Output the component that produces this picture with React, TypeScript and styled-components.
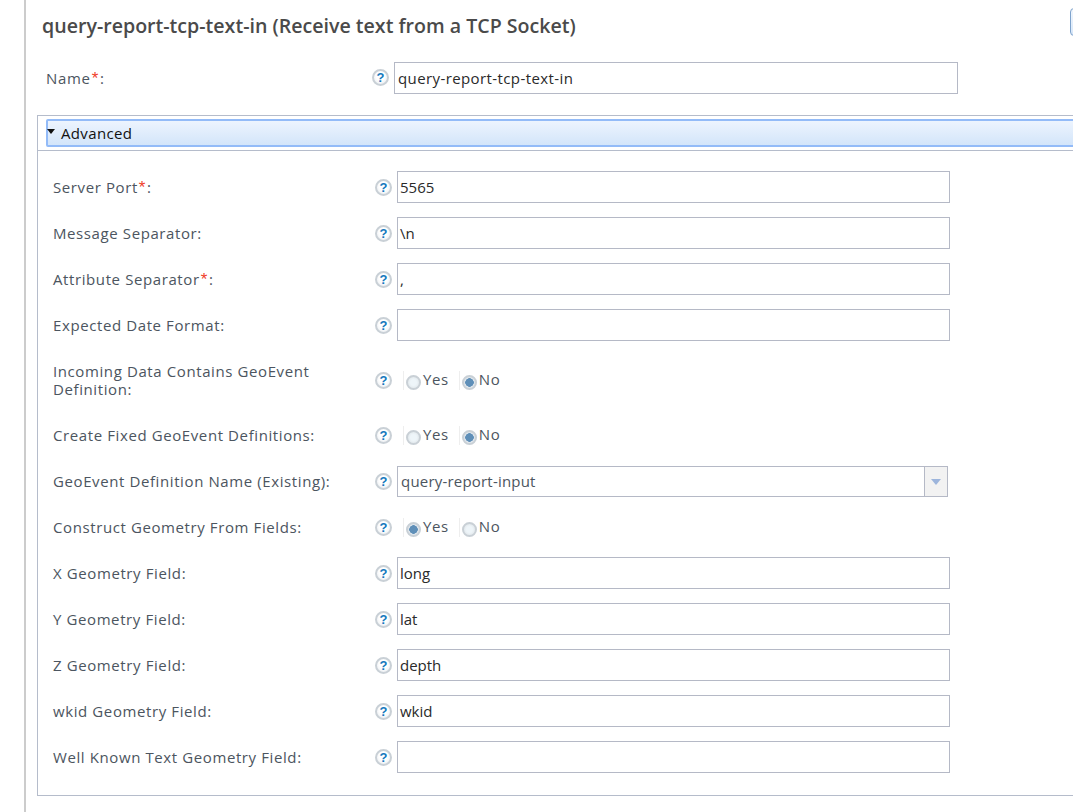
import React from "react";
import styled, { createGlobalStyle } from "styled-components";

const GlobalStyle = createGlobalStyle`
  html, body {
    margin: 0;
    padding: 0;
    height: 100%;
    overflow: hidden;
    background: #fff;
  }
  body {
    font-family: "Open Sans", "DejaVu Sans", sans-serif;
  }
`;

type Field =
  | { kind: "text"; label: string; value?: string; required?: boolean }
  | { kind: "radio"; label: string; selected: "Yes" | "No"; tall?: boolean }
  | { kind: "select"; label: string; value: string };

const fields: Field[] = [
  { kind: "text", label: "Server Port", value: "5565", required: true },
  { kind: "text", label: "Message Separator", value: "\\n" },
  { kind: "text", label: "Attribute Separator", value: ",", required: true },
  { kind: "text", label: "Expected Date Format" },
  { kind: "radio", label: "Incoming Data Contains GeoEvent Definition", selected: "No", tall: true },
  { kind: "radio", label: "Create Fixed GeoEvent Definitions", selected: "No" },
  { kind: "select", label: "GeoEvent Definition Name (Existing)", value: "query-report-input" },
  { kind: "radio", label: "Construct Geometry From Fields", selected: "Yes" },
  { kind: "text", label: "X Geometry Field", value: "long" },
  { kind: "text", label: "Y Geometry Field", value: "lat" },
  { kind: "text", label: "Z Geometry Field", value: "depth" },
  { kind: "text", label: "wkid Geometry Field", value: "wkid" },
  { kind: "text", label: "Well Known Text Geometry Field" },
];

const App = () => {
  return (
    <>
      <GlobalStyle />
      <Page>
        <TitleRow>
          <Title>query-report-tcp-text-in (Receive text from a TCP Socket)</Title>
          <CornerButton />
        </TitleRow>
        <NameRow>
          <NameLabel>
            Name<Star>*</Star>:
          </NameLabel>
          <Help>?</Help>
          <NameInput>query-report-tcp-text-in</NameInput>
        </NameRow>
        <Panel>
          <PanelHeader>
            <HeaderBar>
              <Caret />
              Advanced
            </HeaderBar>
          </PanelHeader>
          <PanelBody>
            {fields.map((field) => (
              <Row key={field.label} $tall={field.kind === "radio" && field.tall}>
                <RowLabel>
                  {field.label}
                  {field.kind === "text" && field.required && <Star>*</Star>}:
                </RowLabel>
                <RowHelp>?</RowHelp>
                {field.kind === "text" && <TextBox>{field.value}</TextBox>}
                {field.kind === "select" && (
                  <SelectBox>
                    <SelectValue>{field.value}</SelectValue>
                    <SelectArrow>
                      <ArrowTip />
                    </SelectArrow>
                  </SelectBox>
                )}
                {field.kind === "radio" && (
                  <RadioGroup>
                    <RadioOption>
                      <Radio $checked={field.selected === "Yes"} />
                      <RadioText>Yes</RadioText>
                    </RadioOption>
                    <RadioOption>
                      <Radio $checked={field.selected === "No"} />
                      <RadioText>No</RadioText>
                    </RadioOption>
                  </RadioGroup>
                )}
              </Row>
            ))}
          </PanelBody>
        </Panel>
      </Page>
    </>
  );
};

export default App;

const Page = styled.div`
  box-sizing: border-box;
  width: 1200px;
  height: 812px;
  margin-left: 24px;
  padding-left: 11px;
  border-left: 2px solid #cccccc;
`;

const TitleRow = styled.div`
  display: flex;
  align-items: center;
  justify-content: space-between;
  height: 43px;
  padding: 8px 0 0 5px;
  box-sizing: border-box;
`;

const Title = styled.h1`
  margin: 0;
  font-size: 19.6px;
  font-weight: 600;
  color: #4a4a4a;
  white-space: nowrap;
`;

const CornerButton = styled.div`
  align-self: flex-start;
  width: 40px;
  height: 28px;
  margin-right: 114px;
  box-sizing: border-box;
  border: 1px solid #7fa3cc;
  border-radius: 4px;
  background: linear-gradient(#f2f7fd, #d6e6f8);
`;

const NameRow = styled.div`
  display: flex;
  align-items: center;
  height: 32px;
  margin-top: 19px;
  padding-left: 9px;
`;

const Star = styled.span`
  margin: 0 1px;
  font-family: "Liberation Sans", sans-serif;
  font-size: 17px;
  line-height: 14px;
  color: #f0402a;
`;

const NameLabel = styled.label`
  width: 326px;
  font-size: 15px;
  letter-spacing: 0.7px;
  color: #4c5560;
`;

const Help = styled.span`
  flex: none;
  display: flex;
  align-items: center;
  justify-content: center;
  box-sizing: border-box;
  width: 17px;
  height: 17px;
  margin-top: -1px;
  border: 2px solid #c9d0d6;
  border-radius: 50%;
  background: radial-gradient(circle at 50% 40%, #ffffff 40%, #e4e9ed 100%);
  color: #1478bd;
  font-family: "Liberation Sans", sans-serif;
  font-size: 13px;
  font-weight: 700;
  line-height: 1;
`;

const RowHelp = styled(Help)`
  margin-top: 0;
`;

const NameInput = styled.div`
  box-sizing: border-box;
  width: 564px;
  height: 32px;
  margin-left: 5px;
  padding-left: 3px;
  border: 1px solid #b5b9c6;
  font-size: 15px;
  letter-spacing: 0.4px;
  line-height: 30px;
  color: #2a2a2a;
`;

const Panel = styled.section`
  width: 1160px;
  margin-top: 21px;
  border: 1px solid #b5bccb;
  box-sizing: border-box;
`;

const PanelHeader = styled.div`
  padding: 3px 0 3px 8px;
  border-bottom: 1px solid #b5bccb;
  background: #fff;
`;

const HeaderBar = styled.div`
  display: flex;
  align-items: center;
  box-sizing: border-box;
  height: 28px;
  border: 2px solid #93bbf8;
  border-radius: 2px;
  background: linear-gradient(#edf4fe, #d3e5fa);
  font-size: 15px;
  letter-spacing: 0.35px;
  color: #111;
`;

const Caret = styled.span`
  width: 0;
  height: 0;
  margin: 0 6px 3px -1px;
  border-left: 4px solid transparent;
  border-right: 4px solid transparent;
  border-top: 5px solid #111;
`;

const PanelBody = styled.div`
  display: flex;
  flex-direction: column;
  gap: 14px;
  padding: 20px 0 22px 15px;
`;

const Row = styled.div<{ $tall?: boolean }>`
  display: flex;
  align-items: center;
  height: ${({ $tall }) => ($tall ? "50px" : "32px")};
`;

const RowLabel = styled.label`
  width: 322px;
  padding-right: 10px;
  box-sizing: border-box;
  font-size: 15px;
  letter-spacing: 0.6px;
  line-height: 18px;
  color: #4c5560;
`;

const TextBox = styled.div`
  box-sizing: border-box;
  width: 553px;
  height: 32px;
  margin-left: 5px;
  padding-left: 2px;
  border: 1px solid #b5b9c6;
  font-size: 15px;
  line-height: 30px;
  color: #2a2a2a;
`;

const SelectBox = styled.div`
  display: flex;
  box-sizing: border-box;
  width: 551px;
  height: 31px;
  margin: 1px 0 0 5px;
  border: 1px solid #b5b9c6;
`;

const SelectValue = styled.div`
  flex: 1;
  padding-left: 3px;
  font-size: 15px;
  letter-spacing: 0.2px;
  line-height: 29px;
  color: #4c5560;
`;

const SelectArrow = styled.div`
  display: flex;
  align-items: center;
  justify-content: center;
  width: 22px;
  border-left: 1px solid #b5b9c6;
  background: #f2f2f2;
`;

const ArrowTip = styled.span`
  width: 0;
  height: 0;
  border-left: 5px solid transparent;
  border-right: 5px solid transparent;
  border-top: 6px solid #9db5dc;
`;

const RadioGroup = styled.div`
  display: flex;
  align-items: center;
  gap: 11px;
  margin-left: 12px;
  font-size: 15px;
  letter-spacing: 0.6px;
  color: #4c5560;
`;

const RadioOption = styled.label`
  display: flex;
  align-items: center;
  gap: 2px;
  padding-left: 2px;
  box-shadow: -1px 0 0 #eeeeee;
`;

const RadioText = styled.span`
  margin-top: -2px;
`;

const Radio = styled.span<{ $checked?: boolean }>`
  display: inline-block;
  box-sizing: border-box;
  width: 15px;
  height: 15px;
  margin-top: 4px;
  border: 2px solid #c9d0d6;
  border-radius: 50%;
  background: ${({ $checked }) =>
    $checked
      ? "radial-gradient(circle, #5f8fb8 0 4px, #dfe6ec 4.5px)"
      : "radial-gradient(circle, #eef5f9 0 3px, #e2e8ec 6px)"};
`;
